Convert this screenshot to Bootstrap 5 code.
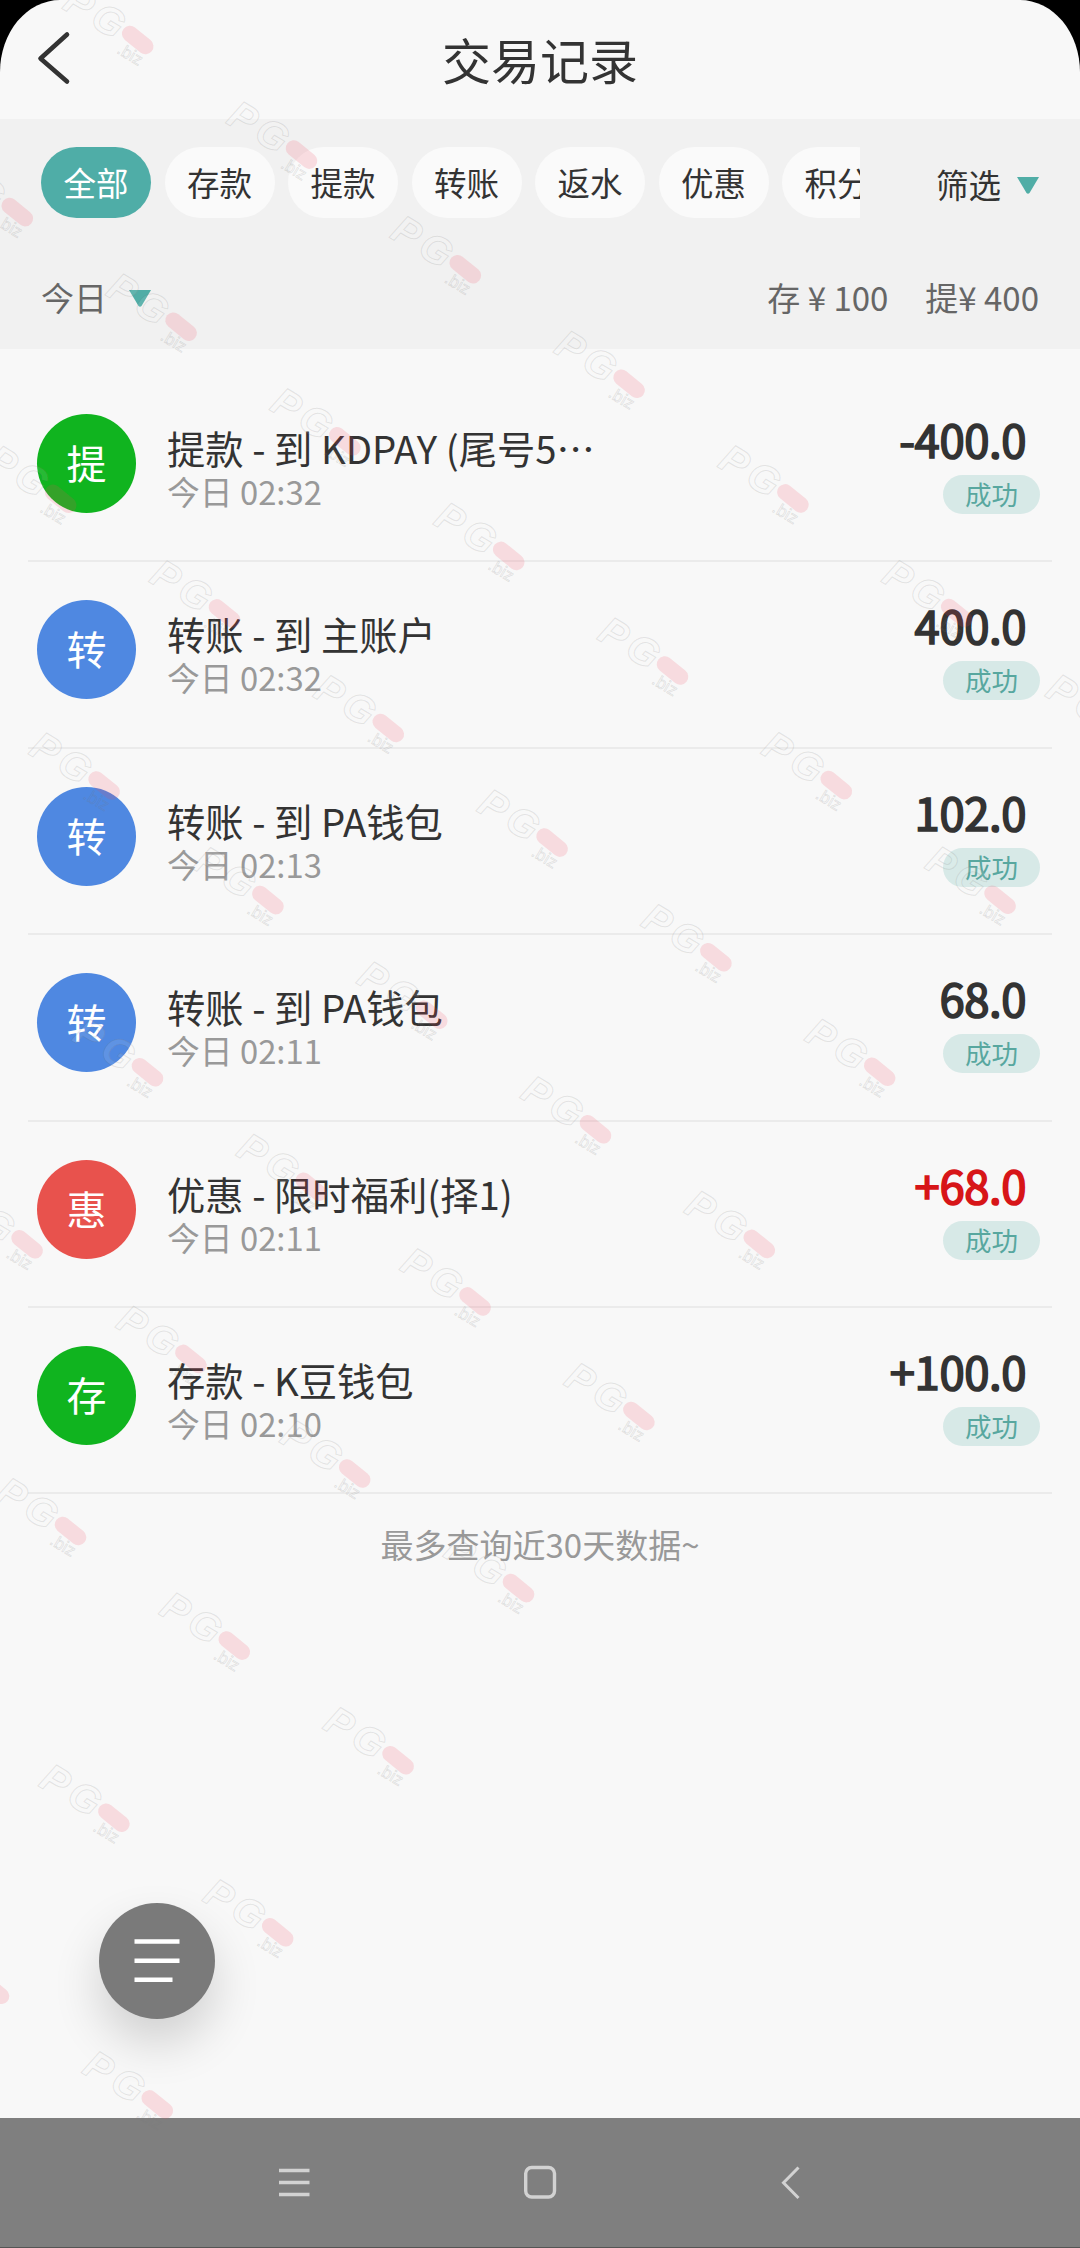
<!DOCTYPE html>
<html lang="zh-CN">
<head>
<meta charset="utf-8">
<meta name="viewport" content="width=device-width, initial-scale=1">
<title>交易记录</title>
<link href="https://cdn.jsdelivr.net/npm/bootstrap@5.3.0/dist/css/bootstrap.min.css" rel="stylesheet">
<style>
body{background:#000;font-family:"Noto Sans CJK SC",sans-serif;color:#333;}
.app{width:1080px;height:2248px;background:#f8f8f8;border-radius:60px 60px 0 0 / 72px 72px 0 0;}
.app-head{height:119px;padding-bottom:1px;}
.back-btn{left:36px;top:30px;line-height:0;}
.page-title{font-size:49px;line-height:60px;font-weight:400;}
.filters{height:230px;background:#f1f1f1;padding:28px 41px 0 41px;}
.chip-strip{width:819px;gap:13.5px;}
.chip{width:110px;height:71px;font-size:32.5px;line-height:70px;background:#fafafa;color:#333;}
.chip.on{background:#4fada7;color:#fff;}
.pick{font-size:32.5px;line-height:40px;gap:16px;padding-top:3px;}
.sum-row{font-size:33px;line-height:40px;color:#666;margin-top:59px;}
.tri{width:22px;height:17px;margin-top:2px;}
.tri-day{margin-left:22px;}
.sum-out{margin-left:37px;}
.list-area{padding:27px 28px 0;}
.entry{height:186.4px;padding:38px 12px 0 9px;border-bottom:2px solid #ebebeb;}
.disc{width:99px;height:99px;font-size:40px;line-height:96px;color:#fff;}
.d-green{background:#10b41f}.d-blue{background:#4f88e1}.d-red{background:#e8524d}
.entry-text{margin-left:31px;padding-top:11px;}
.entry-title{font-size:38.3px;line-height:46px;width:440px;}
.entry-time{font-size:32.8px;line-height:40px;color:#999;}
.amount{font-size:45.4px;line-height:52px;letter-spacing:-.4px;-webkit-text-stroke:1.7px currentColor;margin:-2px 14px 0 0;}
.amount.plus{color:#d71518}
.state{width:97px;height:39px;background:#d7e9e7;color:#58a79f;font-size:26.5px;line-height:38px;margin-top:11px;}
.tail{font-size:33px;line-height:40px;color:#999;margin-top:30px;}
.fab{left:99px;top:1903px;width:116px;height:116px;background:#7a7a7a;box-shadow:0 24px 48px rgba(0,0,0,.16);}
.sysbar{height:130px;background:#7f7f7f;border-bottom:1px solid #555;}
.marks{left:0;top:0;pointer-events:none;}
</style>
<script src="https://cdn.jsdelivr.net/npm/bootstrap@5.3.0/dist/js/bootstrap.bundle.min.js"></script>
</head>
<body>
<div class="app position-relative overflow-hidden d-flex flex-column">
  <header class="app-head d-flex align-items-center justify-content-center position-relative">
    <a href="#" class="back-btn position-absolute" aria-label="返回"><svg width="36" height="56" fill="none" stroke="#333" stroke-width="4.6" stroke-linecap="round" stroke-linejoin="round"><path d="M31 4.500L4.500 28.500L31 51.500"/></svg></a>
    <h1 class="page-title m-0">交易记录</h1>
  </header>

  <section class="filters">
    <div class="d-flex justify-content-between align-items-center">
      <div class="chip-strip d-flex overflow-hidden">
        <span class="chip on rounded-pill text-center flex-shrink-0">全部</span>
        <span class="chip rounded-pill text-center flex-shrink-0">存款</span>
        <span class="chip rounded-pill text-center flex-shrink-0">提款</span>
        <span class="chip rounded-pill text-center flex-shrink-0">转账</span>
        <span class="chip rounded-pill text-center flex-shrink-0">返水</span>
        <span class="chip rounded-pill text-center flex-shrink-0">优惠</span>
        <span class="chip rounded-pill text-center flex-shrink-0">积分</span>
      </div>
      <div class="pick d-flex align-items-center"><span>筛选</span><svg class="tri" viewBox="0 0 22 17"><path d="M0 0H22L12.500 16Q11 17.500 9.500 16Z" fill="#50ada6"/></svg></div>
    </div>
    <div class="sum-row d-flex justify-content-between align-items-center">
      <div class="d-flex align-items-center"><span>今日</span><svg class="tri tri-day" viewBox="0 0 22 17"><path d="M0 0H22L12.500 16Q11 17.500 9.500 16Z" fill="#50ada6"/></svg></div>
      <div class="d-flex"><span>存 ¥ 100</span><span class="sum-out">提¥ 400</span></div>
    </div>
  </section>

  <main class="list-area flex-grow-1">
    <div class="entry d-flex">
      <div class="disc d-green rounded-circle text-center">提</div>
      <div class="entry-text flex-grow-1"><div class="entry-title text-nowrap">提款 - 到 KDPAY (尾号5⋯</div><div class="entry-time">今日 02:32</div></div>
      <div class="d-flex flex-column align-items-end"><div class="amount">-400.0</div><div class="state rounded-pill text-center">成功</div></div>
    </div>
    <div class="entry d-flex">
      <div class="disc d-blue rounded-circle text-center">转</div>
      <div class="entry-text flex-grow-1"><div class="entry-title text-nowrap">转账 - 到 主账户</div><div class="entry-time">今日 02:32</div></div>
      <div class="d-flex flex-column align-items-end"><div class="amount">400.0</div><div class="state rounded-pill text-center">成功</div></div>
    </div>
    <div class="entry d-flex">
      <div class="disc d-blue rounded-circle text-center">转</div>
      <div class="entry-text flex-grow-1"><div class="entry-title text-nowrap">转账 - 到 PA钱包</div><div class="entry-time">今日 02:13</div></div>
      <div class="d-flex flex-column align-items-end"><div class="amount">102.0</div><div class="state rounded-pill text-center">成功</div></div>
    </div>
    <div class="entry d-flex">
      <div class="disc d-blue rounded-circle text-center">转</div>
      <div class="entry-text flex-grow-1"><div class="entry-title text-nowrap">转账 - 到 PA钱包</div><div class="entry-time">今日 02:11</div></div>
      <div class="d-flex flex-column align-items-end"><div class="amount">68.0</div><div class="state rounded-pill text-center">成功</div></div>
    </div>
    <div class="entry d-flex">
      <div class="disc d-red rounded-circle text-center">惠</div>
      <div class="entry-text flex-grow-1"><div class="entry-title text-nowrap">优惠 - 限时福利(择1)</div><div class="entry-time">今日 02:11</div></div>
      <div class="d-flex flex-column align-items-end"><div class="amount plus">+68.0</div><div class="state rounded-pill text-center">成功</div></div>
    </div>
    <div class="entry d-flex">
      <div class="disc d-green rounded-circle text-center">存</div>
      <div class="entry-text flex-grow-1"><div class="entry-title text-nowrap">存款 - K豆钱包</div><div class="entry-time">今日 02:10</div></div>
      <div class="d-flex flex-column align-items-end"><div class="amount">+100.0</div><div class="state rounded-pill text-center">成功</div></div>
    </div>
    <p class="tail text-center mb-0">最多查询近30天数据~</p>
  </main>

  <nav class="sysbar">
    <svg width="1080" height="129" fill="none" stroke="#d2d2d2" stroke-width="3.400">
      <path d="M279 52.500H309.500M279 64.500H309.500M279 76.500H309.500"/>
      <rect x="525.700" y="49.500" width="28.800" height="29.500" rx="6"/>
      <path d="M798.500 49.500L783.500 64.800L798.500 80" stroke-width="3"/>
    </svg>
  </nav>

  <button class="fab position-absolute rounded-circle border-0 p-0" aria-label="菜单">
    <svg class="d-block" width="116" height="116" stroke="#fff" stroke-width="4.600"><path d="M35.500 38.500H80.500M35.500 57.700H80.500M35.500 76.800H73.500"/></svg>
  </button>

  <svg class="marks position-absolute" width="1080" height="2248">
    <defs>
      <g id="wm">
        <g transform="rotate(31)" font-family="Liberation Sans, sans-serif" text-anchor="middle">
          <g font-size="40" font-weight="700" font-style="italic" fill="#fff" fill-opacity=".1" stroke="#777" stroke-opacity=".17" stroke-width="1"><text x="-69" y="12">P</text><text x="-35" y="12">G</text></g>
          <text x="1" y="22" font-size="17" fill="none" stroke="#777" stroke-opacity=".2" stroke-width=".7">.biz</text>
        </g>
        <rect x="-18" y="-8" width="36" height="16" rx="8" transform="rotate(39)" fill="#f0465f" fill-opacity=".16"/>
      </g>
    </defs>
  </svg>
</div>
<script>
// Diagonal lattice of watermarks
const layer = document.querySelector('.marks');
for (let j = 0; j <= 8; j++) {
  for (let i = -4; i + j <= 6; i++) {
    const x = 137.7 + 163.8 * i + 43.4 * j, y = 40 + 114.6 * i + 286.7 * j;
    if (x < -20) continue;
    const u = document.createElementNS('http://www.w3.org/2000/svg', 'use');
    u.setAttribute('href', '#wm');
    u.setAttribute('x', x);
    u.setAttribute('y', y);
    layer.appendChild(u);
  }
}
</script>
</body>
</html>
